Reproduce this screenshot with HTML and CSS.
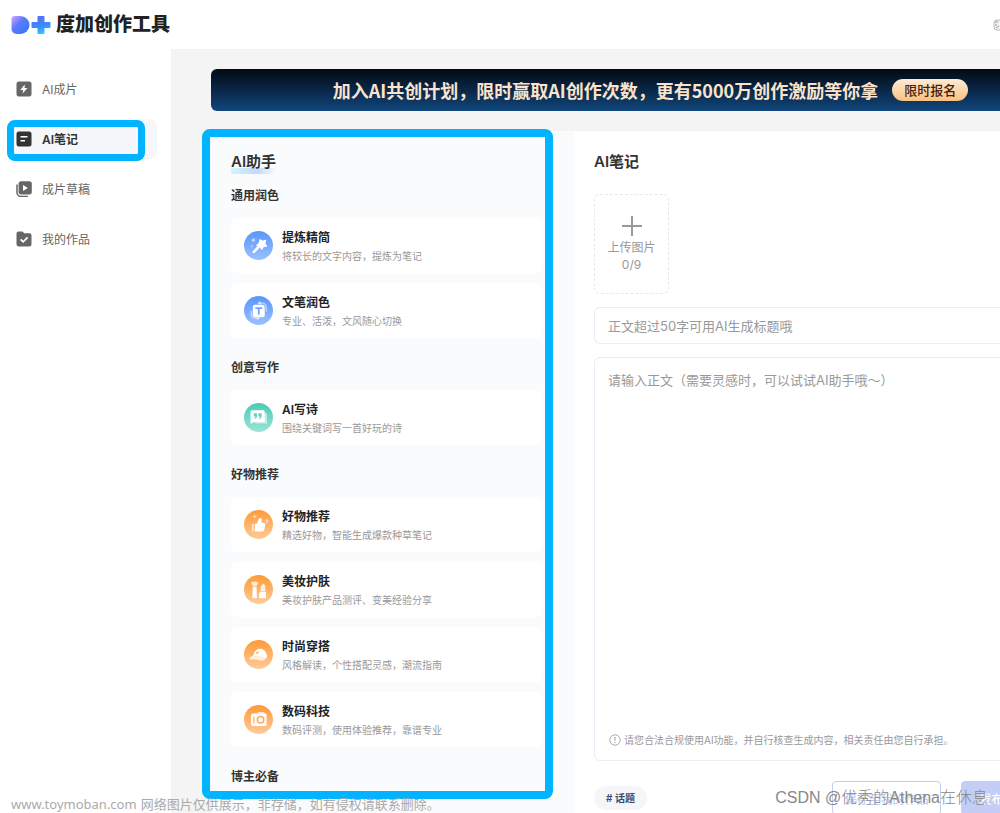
FILE: index.html
```html
<!DOCTYPE html>
<html lang="zh-CN">
<head>
<meta charset="utf-8">
<title>度加创作工具</title>
<link rel="stylesheet" href="styles.css">
</head>
<body>
<div class="page">
  <header class="header">
    <a class="logo" href="#">
      <svg class="logo-mark" viewBox="0 0 40 20" aria-hidden="true">
        <defs>
          <linearGradient id="lg-d" x1="0" y1="0" x2="0.8" y2="0.8"><stop offset="0" stop-color="#dfa6fb"/><stop offset=".5" stop-color="#5b7cfb"/><stop offset="1" stop-color="#3f78f8"/></linearGradient>
          <linearGradient id="lg-p" x1="0.3" y1="0" x2="0.6" y2="1"><stop offset="0" stop-color="#5a6ff6"/><stop offset=".6" stop-color="#3b8bfb"/><stop offset="1" stop-color="#23d5fb"/></linearGradient>
        </defs>
        <path d="M4 1h6a9 9 0 0 1 0 18H6a5 5 0 0 1-5-5V4a3 3 0 0 1 3-3z" fill="url(#lg-d)"/>
        <path d="M28 1h5q1 0 1 1v5h5q1 0 1 1v4q0 1-1 1h-5v5q0 1-1 1h-5q-1 0-1-1v-5h-5q-1 0-1-1V8q0-1 1-1h5V2q0-1 1-1z" fill="url(#lg-p)"/>
      </svg>
      <span>度加创作工具</span>
    </a>
    <a class="user" href="#" aria-label="个人中心">
      <svg viewBox="0 0 12 12" aria-hidden="true"><rect x="1" y="1" width="10" height="10" rx="3" fill="#f3f3f3" stroke="#bbb"/><path d="M2 3h3M2 6h2M3 9l3-2" stroke="#999" fill="none"/></svg>
    </a>
  </header>

  <div class="body">
    <nav class="sidebar">
      <a class="nav-item" href="#">
        <svg viewBox="0 0 16 16" aria-hidden="true"><rect x=".5" y=".5" width="15" height="15" rx="2.5" fill="#666"/><path d="M8.8 3.4 4.2 8.9h2.9l-.5 3.7 4.9-5.6H8.6z" fill="#fff"/></svg>
        <span>AI成片</span>
      </a>
      <a class="nav-item nav-active" href="#" aria-current="page">
        <svg viewBox="0 0 16 16" aria-hidden="true"><rect x=".5" y=".5" width="15" height="15" rx="2.5" fill="#333"/><path d="M4.5 5.8h7M4.5 9.7h4.5" stroke="#fff" stroke-width="1.6"/></svg>
        <span>AI笔记</span>
      </a>
      <a class="nav-item" href="#">
        <svg viewBox="0 0 16 16" aria-hidden="true"><path d="M1 3.5v8a4 4 0 0 0 4 4h7" fill="none" stroke="#666" stroke-width="1.5"/><rect x="2.6" y=".3" width="13.2" height="13.2" rx="2.5" fill="#666"/><path d="M7 3.9v6l4.9-3z" fill="#fff"/></svg>
        <span>成片草稿</span>
      </a>
      <a class="nav-item" href="#">
        <svg viewBox="0 0 16 16" aria-hidden="true"><path d="M2.5.5h4l1.700 1.700h5.300a2 2 0 0 1 2 2v9a2.300 2.300 0 0 1-2.300 2.300H2.800a2.300 2.300 0 0 1-2.300-2.300V2.500a2 2 0 0 1 2-2z" fill="#666"/><path d="m4.600 8.300 2.600 2.500 4.400-4.500" fill="none" stroke="#fff" stroke-width="1.700"/></svg>
        <span>我的作品</span>
      </a>
      <span class="mark mark-nav"></span>
    </nav>

    <main class="main">
      <div class="banner">
        <strong>加入AI共创计划，限时赢取AI创作次数，更有5000万创作激励等你拿</strong>
        <button class="banner-btn" type="button">限时报名</button>
      </div>

      <div class="workspace">
        <section class="assistant">
          <h2 class="title"><span class="title-glow">AI助手</span></h2>

          <div class="group">
            <h3>通用润色</h3>
            <button class="card" type="button">
              <svg class="icon" viewBox="0 0 28 28" aria-hidden="true">
                <defs>
                  <linearGradient id="blue" x2="0" y2="1"><stop stop-color="#5895fb"/><stop offset="1" stop-color="#9cc0ff"/></linearGradient>
                  <linearGradient id="teal" x2="0" y2="1"><stop stop-color="#4bcab4"/><stop offset="1" stop-color="#9be5d6"/></linearGradient>
                  <linearGradient id="orange" x2="0" y2="1"><stop stop-color="#fd9a38"/><stop offset="1" stop-color="#ffcb98"/></linearGradient>
                </defs>
                <circle cx="14" cy="14" r="14" fill="url(#blue)"/>
                <path d="m15.500 8.500 2.300 1.500 3-.9-.7 3 1.600 2.500-2.900.3-1.800 2.600-1.400-2.800-3.200-.8 2.300-2.200z" fill="#fff" stroke="#fff" stroke-width="1.200" stroke-linejoin="round"/>
                <path d="m14.500 15-5 5.200" stroke="#fff" stroke-width="2.600" stroke-linecap="round"/>
                <path d="m8.500 6.500.9 1.100 1.600-.2-.8 1.400.8 1.400-1.600-.3-1 1.200-.3-1.600-1.500-.6 1.500-.8z" fill="#fff" opacity=".6"/><circle cx="7.500" cy="14.500" r="1.200" fill="#fff" opacity=".35"/>
              </svg>
              <span class="card-text"><b>提炼精简</b><span>将较长的文字内容，提炼为笔记</span></span>
            </button>
            <button class="card" type="button">
              <svg class="icon" viewBox="0 0 28 28" aria-hidden="true">
                <circle cx="14" cy="14" r="14" fill="url(#blue)"/>
                <path d="M14 7h4a3.500 3.500 0 0 1 3.500 3.500V15M14 21.500h-3.500A3.500 3.500 0 0 1 7 18v-4" fill="none" stroke="#fff" stroke-width="1.400" opacity=".5"/><path d="m16 4.500-3 2.500 3 2zM12.500 19l3 2.500-3 2z" fill="#fff" opacity=".6"/>
                <rect x="8.500" y="8.500" width="11.500" height="12" rx="2" fill="#fff"/>
                <path d="M11 11.700h6.500M14.250 12v6" stroke="#70a4fc" stroke-width="1.600"/>
              </svg>
              <span class="card-text"><b>文笔润色</b><span>专业、活泼，文风随心切换</span></span>
            </button>
          </div>

          <div class="group">
            <h3>创意写作</h3>
            <button class="card" type="button">
              <svg class="icon" viewBox="0 0 28 28" aria-hidden="true">
                <circle cx="14" cy="14" r="14" fill="url(#teal)"/>
                <path d="M20.500 9.500h.700q1 0 1 1v10.300l-1.700-1H11v-1.500" fill="#fff" opacity=".55"/>
                <path d="M8 7h10.500Q20 7 20 8.500v8.700q0 1.500-1.500 1.500H9l-2.700 1.500V8.500Q6.300 7 8 7z" fill="#fff"/>
                <path d="M9.500 10h3v2.800q0 2-2 2.700l-.5-.8q1.200-.7 1.200-1.700H9.500zM14 10h3v2.800q0 2-2 2.700l-.5-.8q1.200-.7 1.200-1.700H14z" fill="#62d0bd"/>
              </svg>
              <span class="card-text"><b>AI写诗</b><span>围绕关键词写一首好玩的诗</span></span>
            </button>
          </div>

          <div class="group">
            <h3>好物推荐</h3>
            <button class="card" type="button">
              <svg class="icon" viewBox="0 0 28 28" aria-hidden="true">
                <circle cx="14" cy="14" r="14" fill="url(#orange)"/>
                <path d="M10.500 13.300h1.800l2-4.600q.4-1.200 1.500-1 1.600.3 1.400 2l-.4 2.600h2.200q1.800 0 1.500 1.800l-.9 5q-.3 1.700-2 1.700h-7.100z" fill="#fff"/>
                <path d="M8.500 13.300v7.500" stroke="#fff" stroke-width="1.500" opacity=".8"/>
                <path d="M10.300 4.500v3.400M8.600 6.200H12M22 8.700v4M20 10.700h4" stroke="#fff" opacity=".65"/>
              </svg>
              <span class="card-text"><b>好物推荐</b><span>精选好物，智能生成爆款种草笔记</span></span>
            </button>
            <button class="card" type="button">
              <svg class="icon" viewBox="0 0 28 28" aria-hidden="true">
                <circle cx="14" cy="14" r="14" fill="url(#orange)"/>
                <path d="M6.700 7.200q3.500-2 7.200 0l-1.900 3.600H8.600z" fill="#fff" opacity=".75"/>
                <path d="M8.500 11.300h3.600l.4 11.200H8z" fill="#fff"/>
                <path d="M16 15.700V11.500l2.600-3.300q1.800 1 1.800 3v4.500z" fill="#fff" opacity=".8"/>
                <path d="M15.300 16.200h5.900v6.300h-6.700v-4z" fill="#fff"/>
              </svg>
              <span class="card-text"><b>美妆护肤</b><span>美妆护肤产品测评、变美经验分享</span></span>
            </button>
            <button class="card" type="button">
              <svg class="icon" viewBox="0 0 28 28" aria-hidden="true">
                <circle cx="14" cy="14" r="14" fill="url(#orange)"/>
                <path d="M9 15.800c.4-4.200 2.700-7 6.600-7 4.200 0 6.600 3.200 6.600 7.800l-1 1.300c-3-2-7-2.500-12.200-2.100z" fill="#fff"/>
                <path d="M9 14.800c-2.400 1.100-4 2.700-3.800 3.900 2.800.7 5.500-.5 8.500.6 2.700 1 5 .8 7.500-1.500-3-2.600-8-2.300-12.200-2z" fill="#fff" opacity=".78"/>
                <path d="M11.200 12.800q1-2 2.800-1.400v1.700z" fill="#fd9d40"/><path d="M13 9.500q3-1.300 4.500 0" stroke="#fff" fill="none"/>
              </svg>
              <span class="card-text"><b>时尚穿搭</b><span>风格解读，个性搭配灵感，潮流指南</span></span>
            </button>
            <button class="card" type="button">
              <svg class="icon" viewBox="0 0 28 28" aria-hidden="true">
                <circle cx="14" cy="14" r="14" fill="url(#orange)"/>
                <path d="m12.500 8.500.8-1.800h6l1 1.800z" fill="#fff" opacity=".7"/>
                <rect x="6.800" y="8.200" width="15" height="12" rx="1.500" fill="#fff"/>
                <circle cx="16" cy="14.200" r="3.100" fill="#fff" stroke="#feac60" stroke-width="1.500"/>
                <path d="M9.600 11v6.500" stroke="#feac60" stroke-width="1.200"/>
              </svg>
              <span class="card-text"><b>数码科技</b><span>数码评测，使用体验推荐，靠谱专业</span></span>
            </button>
          </div>

          <div class="group">
            <h3>博主必备</h3>
          </div>
          <span class="mark mark-panel"></span>
        </section>

        <section class="editor">
          <h2 class="title">AI笔记</h2>
          <button class="upload" type="button">
            <svg viewBox="0 0 20 20" aria-hidden="true"><path d="M10 0v20M0 10h20" stroke="#999" stroke-width="2"/></svg>
            <span>上传图片</span>
            <span>0/9</span>
          </button>
          <input class="field" type="text" aria-label="标题" placeholder="正文超过50字可用AI生成标题哦">
          <div class="compose">
            <textarea aria-label="正文" placeholder="请输入正文（需要灵感时，可以试试AI助手哦～）"></textarea>
            <p class="notice">
              <svg viewBox="0 0 12 12" aria-hidden="true"><circle cx="6" cy="6" r="5.200" fill="none" stroke="#999" stroke-width=".8"/><path d="M6 3v3.800M6 8v1" stroke="#999"/></svg>
              请您合法合规使用AI功能，并自行核查生成内容，相关责任由您自行承担。
            </p>
          </div>
          <div class="actions">
            <button class="topic" type="button"># 话题</button>
            <button class="btn" type="button">保存至我的作品</button>
            <button class="btn btn-primary" type="button">发布到百家号</button>
          </div>
        </section>
      </div>
    </main>
  </div>
</div>
<p class="source-note"><span>www.toymoban.com</span><span>网络图片仅供展示，非存储，如有侵权请联系删除。</span></p>
<p class="author-note">CSDN @优秀的Athena在休息</p>
</body>
</html>
```

FILE: styles.css
```css
* { box-sizing: border-box; }

body {
  position: relative;
  height: 100vh;
  margin: 0;
  overflow: hidden;
  background: #fff;
  color: #333;
  font-family: Inter, "Noto Sans CJK SC", sans-serif;
  font-size: 12px;
}

h2, h3, p { margin: 0; }
a { color: inherit; text-decoration: none; }
button, input, textarea { font: inherit; color: inherit; }
svg { flex: none; }

.page {
  display: flex;
  flex-direction: column;
  min-width: 1110px;
  min-height: 100vh;
}

.header {
  display: flex;
  align-items: center;
  justify-content: space-between;
  height: 49px;
  padding: 0 105px 0 10px;
}
.logo {
  display: flex;
  align-items: center;
  gap: 5px;
  color: #222;
  font-size: 19px;
  font-weight: 900;
  line-height: 28px;
}
.logo-mark { width: 41px; height: 20px; }
.user svg { display: block; width: 12px; height: 12px; }

.body { display: flex; flex: 1; }

.sidebar {
  position: relative;
  display: flex;
  flex: none;
  flex-direction: column;
  gap: 10px;
  width: 171px;
  padding: 20px 14px 20px 7px;
}
.nav-item {
  display: flex;
  align-items: center;
  gap: 10px;
  height: 40px;
  padding-left: 9px;
  border-radius: 8px;
  color: #666;
}
.nav-item svg { width: 16px; height: 16px; }
.nav-item span { padding-bottom: 2px; }
.nav-active { background: #f6f7fb; color: #333; font-weight: 600; }

/* highlight frames laid over the page */
.mark {
  position: absolute;
  border: 8px solid #00b4ff;
  border-radius: 8px;
  pointer-events: none;
}
.mark-nav { top: 71px; left: 7px; width: 138px; height: 41px; border-width: 7px; }
.mark-panel { top: -2px; left: -9px; width: 351px; height: 670px; }

.main {
  flex: 1;
  padding: 20px 20px 0 40px;
  background: #f4f4f4;
}
.banner {
  display: flex;
  align-items: center;
  justify-content: center;
  gap: 14px;
  height: 42px;
  margin-bottom: 20px;
  border-radius: 6px;
  background: linear-gradient(#020a14, #0a2747 50%, #10467c);
  color: #fbe3cb;
  font-family: "Noto Sans CJK SC", sans-serif;
  font-size: 18px;
  white-space: nowrap;
}
.banner-btn {
  height: 22px;
  padding: 0 12px;
  border: 0;
  border-radius: 11px;
  background: linear-gradient(#fdebd8, #fbc07c);
  color: #43200f;
  font-size: 13px;
  font-weight: 500;
  line-height: 20px;
}

.workspace { display: flex; align-items: stretch; }
.title { font-size: 15px; font-weight: 600; line-height: 20px; }

.assistant {
  position: relative;
  display: flex;
  flex: none;
  flex-direction: column;
  gap: 20px;
  width: 363px;
  padding: 21px 32px 40px 20px;
  background: #fafbfd;
}
.assistant .title { height: 20px; margin-bottom: -6px; }
.title-glow {
  display: inline-block;
  padding-bottom: 2px;
  background: linear-gradient(90deg, #d2f5fd, #c3d9fd 60%, #fafbfd) 0 100% / 100% 6px no-repeat;
  line-height: 20px;
}
.group { display: flex; flex-direction: column; gap: 10px; }
.group h3 { margin-bottom: 2px; font-size: 12px; font-weight: 600; line-height: 20px; }

.card {
  display: flex;
  align-items: center;
  gap: 9px;
  height: 55px;
  padding: 0 13px;
  border: 0;
  border-radius: 6px;
  background: #fff;
  text-align: left;
}
.icon { width: 29px; height: 29px; }
.card-text { display: flex; flex-direction: column; gap: 1px; padding-top: 2px; }
.card-text b { color: #222; font-size: 12px; font-weight: 600; line-height: 18px; }
.card-text span { color: #999; font-size: 10px; line-height: 16px; }

.editor {
  display: flex;
  flex: 1;
  flex-direction: column;
  gap: 13px;
  padding: 21px 20px;
  background: #fff;
}
.editor .title { margin-bottom: 9px; }
.upload {
  display: flex;
  flex-direction: column;
  align-items: center;
  justify-content: center;
  width: 75px;
  height: 100px;
  padding: 0;
  border: 1px dashed #e6e8ee;
  border-radius: 6px;
  background: #fff;
  color: #999;
  font-size: 12px;
  line-height: 17px;
}
.upload svg { width: 20px; height: 20px; margin-bottom: 3px; }
.field, .compose {
  border: 1px solid #eaecf5;
  border-radius: 6px;
  background: #fff;
}
.field { height: 37px; padding: 0 13px; font-size: 13px; outline: none; }
.compose { display: flex; flex-direction: column; height: 404px; padding: 12px 13px; }
.compose textarea {
  flex: 1;
  padding: 0;
  border: 0;
  outline: none;
  resize: none;
  background: none;
  font-size: 13px;
  line-height: 20px;
}
::placeholder { color: #999; opacity: 1; }
.notice { display: flex; align-items: center; gap: 3px; padding-left: 1px; color: #999; font-size: 10px; line-height: 16px; }
.notice svg { width: 12px; height: 12px; }

.actions { display: flex; align-items: center; gap: 20px; margin-top: 7px; }
.topic {
  height: 24px;
  margin-right: auto;
  padding: 0 12px 2px;
  border: 0;
  border-radius: 12px;
  background: #f4f6fa;
  color: #3d4a6b;
  font-size: 10px;
  font-weight: 600;
}
.btn {
  width: 109px;
  height: 34px;
  padding: 0;
  border: 1px solid #c3cdf6;
  border-radius: 4px;
  background: #fff;
  color: #b4c0f2;
  font-size: 12px;
}
.btn-primary { background: #c3cdf6; color: #fff; font-weight: 500; }

/* watermarks printed across the bottom of the window */
.source-note, .author-note {
  position: absolute;
  white-space: nowrap;
  pointer-events: none;
}
.source-note {
  bottom: 0;
  left: 11px;
  display: flex;
  gap: 4px;
  color: #aaa;
  font-family: "Noto Sans", "Noto Sans CJK SC", sans-serif;
  font-size: 13px;
  line-height: 18px;
}
.author-note {
  right: 12px;
  bottom: 4px;
  color: #888;
  font-family: "Liberation Sans", "Noto Sans CJK SC", sans-serif;
  font-size: 16px;
  font-weight: 300;
  line-height: 22px;
}
```
